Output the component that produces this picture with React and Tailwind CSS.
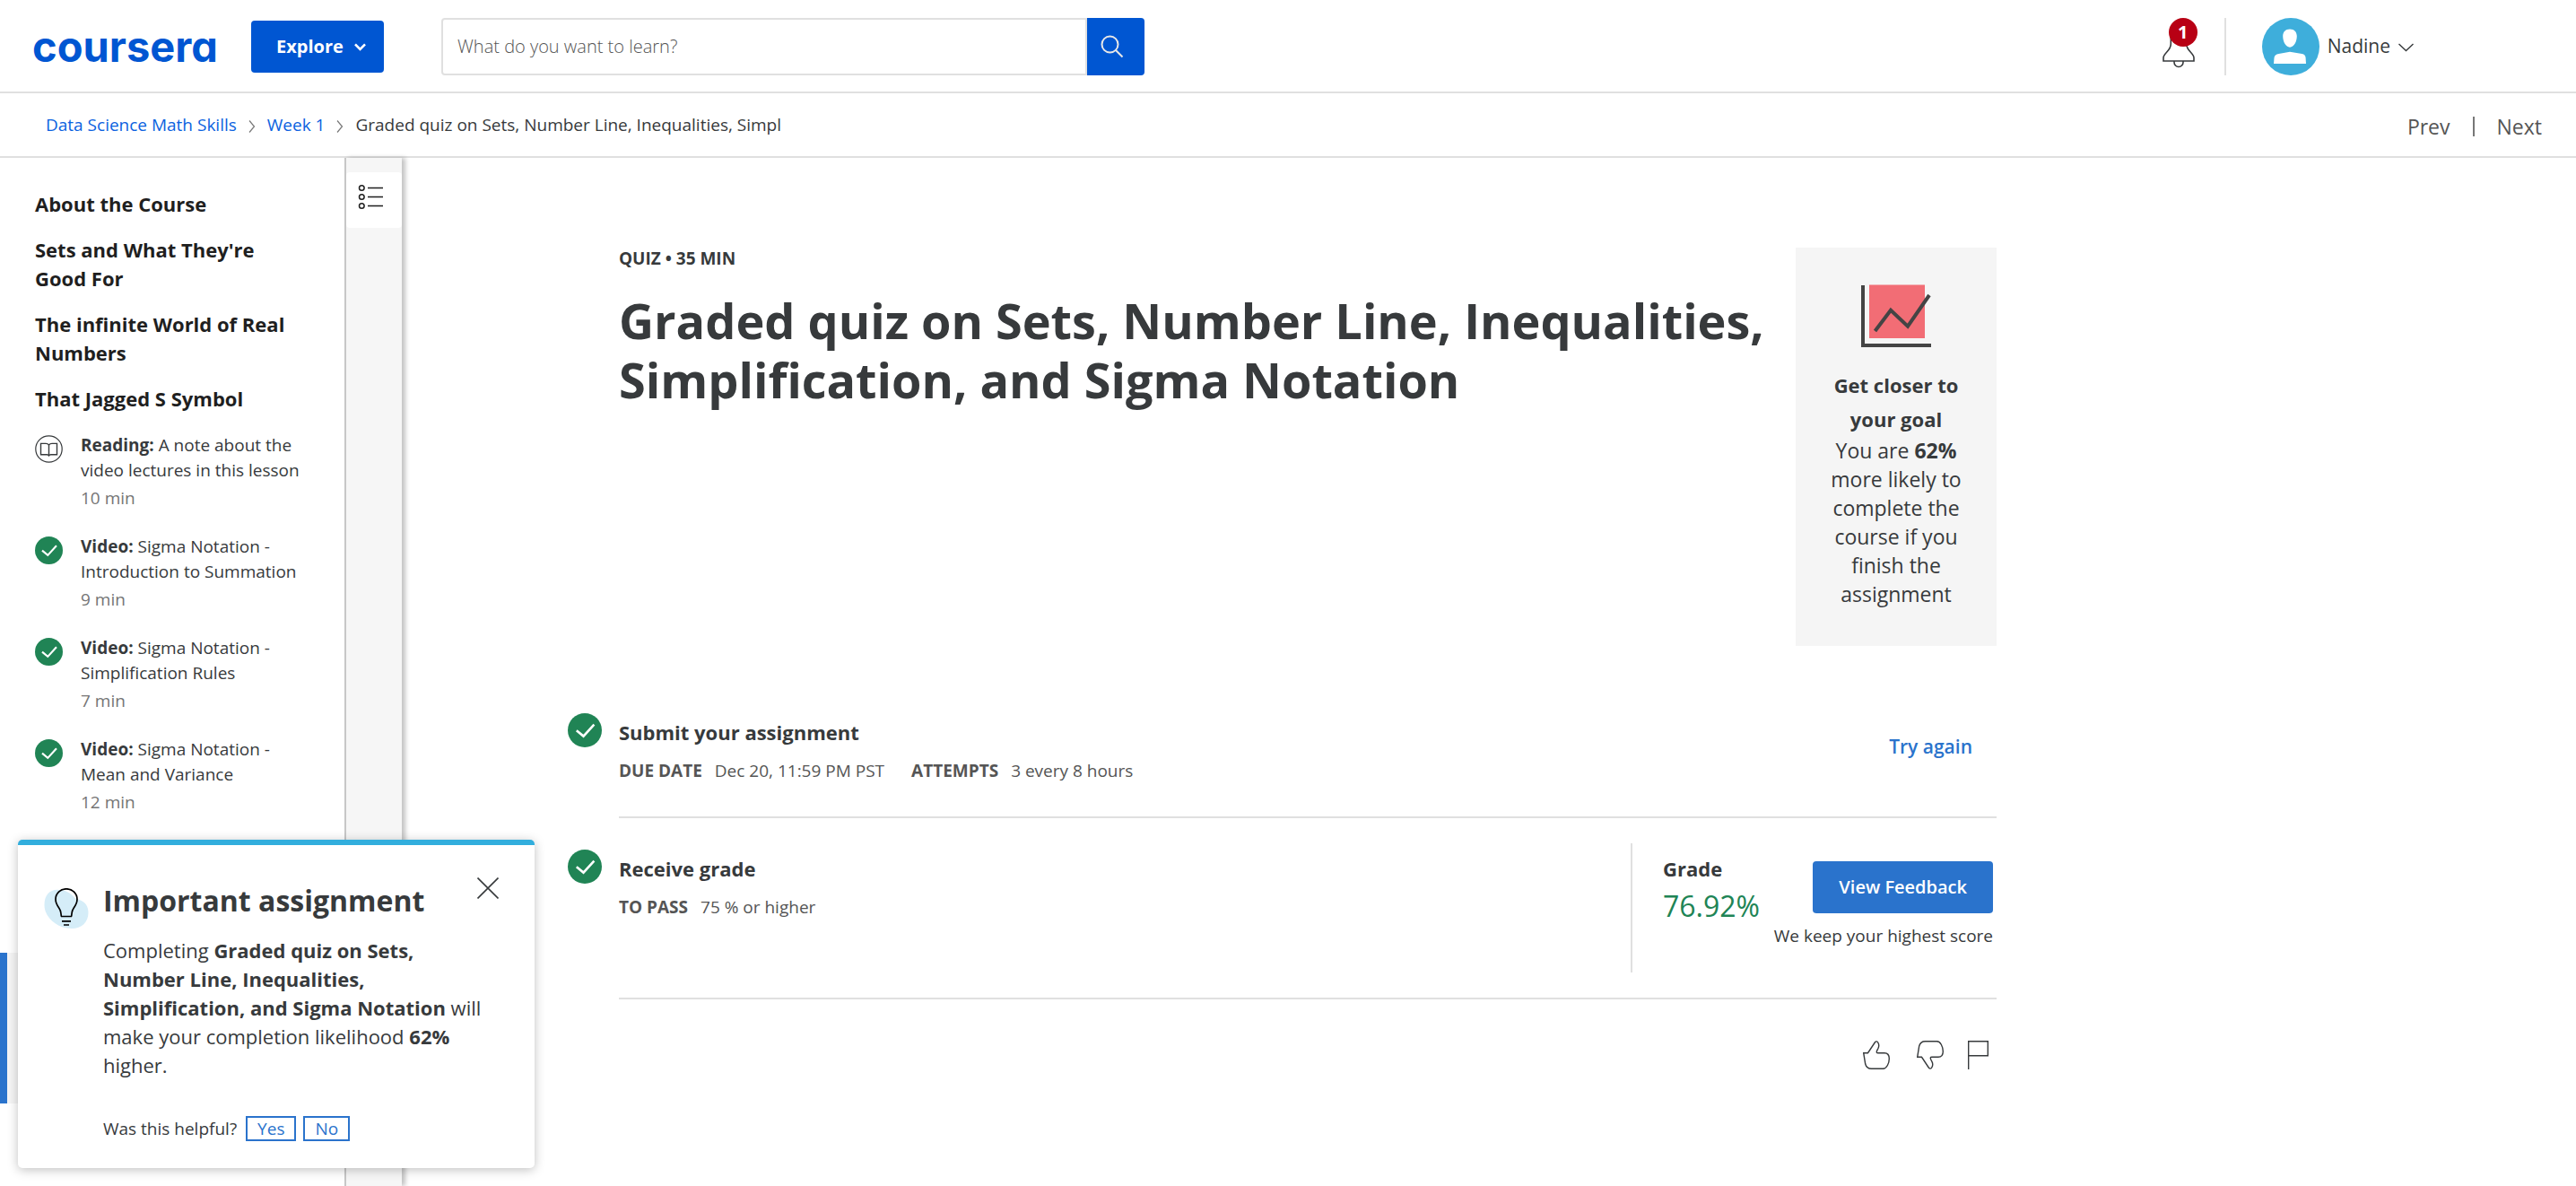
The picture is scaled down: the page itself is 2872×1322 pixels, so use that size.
import React from "react";

function CheckCircle({ className }) {
  return (
    <svg viewBox="0 0 38 38" className={className} role="img" aria-label="Completed">
      <circle cx="19" cy="19" r="19" fill="#208455" />
      <path d="M9.8 19.2 17.5 25.6 29.4 12.6" fill="none" stroke="#fff" strokeWidth="2.6" />
    </svg>
  );
}

function BookCircle({ className }) {
  return (
    <svg viewBox="0 0 31 31" className={className} fill="none" stroke="#373a3c" role="img" aria-label="Reading">
      <circle cx="15.5" cy="15.5" r="14.7" strokeWidth="1.2" />
      <path
        d="M15.5 11.2C14.6 9.7 13.5 9.4 12 9.4H6.5V21.8H13.4C14.6 21.8 15 22.2 15.5 23 16 22.2 16.4 21.8 17.6 21.8H24.5V9.4H19C17.5 9.4 16.4 9.7 15.5 11.2ZM15.5 11.2V22.6"
        strokeWidth="1.4"
      />
    </svg>
  );
}

function Header() {
  return (
    <header className="flex h-[104px] shrink-0 items-center border-b-2 border-[#e0e0e0] pt-[2px] pr-[181px] pl-[36px]">
      <a
        href="#home"
        className="w-[244px] shrink-0 font-['Inter',sans-serif] text-[47px] leading-[56px] font-bold text-[#0056d2] [font-feature-settings:'cv11']"
      >
        coursera
      </a>
      <button
        type="button"
        className="flex h-[58px] w-[148px] shrink-0 items-center gap-3 rounded-[4px] bg-[#0056d2] pl-7 text-[20px] leading-7 font-bold text-white"
      >
        Explore
        <svg viewBox="0 0 13 9" className="h-[9px] w-[13px]" fill="none" stroke="#fff" strokeWidth="2.6" aria-hidden="true">
          <path d="M1 1.4 6.5 7 12 1.4" />
        </svg>
      </button>
      <form role="search" className="ml-16 flex h-16 max-w-[784px] flex-1">
        <input
          type="text"
          aria-label="Search courses"
          placeholder="What do you want to learn?"
          className="min-w-0 flex-1 rounded-l-[4px] border-2 border-[#e0e0e0] px-4 text-[20px] font-light text-[#373a3c] placeholder:text-[#555]"
        />
        <button type="submit" aria-label="Search" className="flex w-16 items-center justify-center rounded-r-[4px] bg-[#0056d2]">
          <svg viewBox="0 0 26 26" className="mr-2 size-[26px]" fill="none" stroke="#e8e8e8" strokeWidth="2" aria-hidden="true">
            <circle cx="10.5" cy="10.5" r="9" />
            <path d="M17 17 24.5 24.5" />
          </svg>
        </button>
      </form>
      <div className="ml-auto flex items-center">
        <button type="button" aria-label="Notifications, 1 unread" className="relative">
          <svg viewBox="0 0 36 48" className="h-12 w-9" fill="none" stroke="#373a3c" strokeWidth="1.6" aria-hidden="true">
            <path d="M1 40V36.5C1 31 9.3 29 9.3 21V14C9.3 8 13 5 18 5S26.7 8 26.7 14V21C26.7 29 35 31 35 36.5V40Z" />
            <path d="M13 40V41.5A5 5 0 0 0 23 41.5V40" />
          </svg>
          <span className="absolute -top-2 left-[7px] flex size-8 items-center justify-center rounded-full bg-[#b80014] text-[20px] leading-none font-bold text-white">
            1
          </span>
        </button>
        <div className="ml-[33px] h-16 w-[2px] bg-[#e0e0e0]" />
        <button type="button" className="ml-10 flex items-center text-[21px] text-[#373a3c]">
          <svg viewBox="0 0 64 64" className="size-16" aria-hidden="true">
            <circle cx="32" cy="32" r="32" fill="#3eaedb" />
            <path
              d="M31 12.5C36 12.5 38.8 15.8 38.8 20.3 38.8 26.5 35.500 32.7 31 32.7S23.2 26.5 23.2 20.3C23.2 15.8 26 12.5 31 12.5ZM13 51 13.5 44.5C13.8 41.8 15.5 40.4 18.5 39.9L31 37.7 44.5 39.9C47.2 40.4 48.4 41.8 48.6 44.5L49 51Z"
              fill="#fff"
            />
          </svg>
          <span className="ml-[9px]">Nadine</span>
          <svg viewBox="0 0 17 10" className="mt-[2px] ml-[9px] h-[10px] w-[17px]" fill="none" stroke="#373a3c" strokeWidth="1.4" aria-hidden="true">
            <path d="M.5 1 8.5 8.5 16.5 1" />
          </svg>
        </button>
      </div>
    </header>
  );
}

function Separator() {
  return (
    <svg viewBox="0 0 8 14" className="mt-1 h-[14px] w-2" fill="none" stroke="#777" strokeWidth="1.2" aria-hidden="true">
      <path d="M1 .5 6.5 7 1 13.5" />
    </svg>
  );
}

function BreadcrumbBar() {
  return (
    <div className="flex h-[72px] shrink-0 items-center justify-between border-b-2 border-[#e0e0e0] pr-[38px] pl-[51px]">
      <nav aria-label="Breadcrumb" className="flex items-center gap-[13px] text-[19px] leading-7 text-[#0b62e0]">
        <a href="#course">Data Science Math Skills</a>
        <Separator />
        <a href="#week-1">Week 1</a>
        <Separator />
        <span className="text-[#373a3c]">Graded quiz on Sets, Number Line, Inequalities, Simpl</span>
      </nav>
      <nav aria-label="Items" className="flex items-center gap-[25px] pt-1 text-[23px] leading-8 text-[#555]">
        <a href="#prev">Prev</a>
        <span className="h-[22px] w-[2px] bg-[#777]" />
        <a href="#next">Next</a>
      </nav>
    </div>
  );
}

const headings = ["About the Course", "Sets and What They're Good For", "The infinite World of Real Numbers", "That Jagged S Symbol"];

const items = [
  { kind: "Reading:", title: "A note about the video lectures in this lesson", time: "10 min" },
  { kind: "Video:", title: "Sigma Notation - Introduction to Summation", time: "9 min", done: true },
  { kind: "Video:", title: "Sigma Notation - Simplification Rules", time: "7 min", done: true },
  { kind: "Video:", title: "Sigma Notation - Mean and Variance", time: "12 min", done: true },
];

function Sidebar() {
  return (
    <aside className="w-96 shrink-0 overflow-hidden pt-[35px]">
      <div className="flex flex-col gap-[19px] pr-12 pl-[39px] text-[22px] leading-8 font-bold text-[#1f1f1f]">
        {headings.map((h) => (
          <h2 key={h}>{h}</h2>
        ))}
      </div>
      <ul className="mt-[22px] flex flex-col gap-[26px] pr-10 pl-[39px] text-[19px] leading-7 text-[#373a3c]">
        {items.map((item) => (
          <li key={item.title}>
            <a href="#item" className="flex gap-5">
              {item.done ? <CheckCircle className="mt-[3px] size-[31px] shrink-0" /> : <BookCircle className="mt-[3px] size-[31px] shrink-0" />}
              <span className="flex flex-col gap-[3px]">
                <span>
                  <strong>{item.kind}</strong> {item.title}
                </span>
                <span className="text-[#757575]">{item.time}</span>
              </span>
            </a>
          </li>
        ))}
      </ul>
      <a href="#quiz" aria-label="Graded quiz" aria-current="page" className="mt-[154px] block h-[168px] border-l-8 border-[#2a73cc] bg-[#f5f5f5]" />
    </aside>
  );
}

function Rail() {
  return (
    <div className="w-16 shrink-0 border-l-2 border-[#c7c7c7] bg-[#f6f6f6] pt-4 shadow-[4px_0_5px_rgba(0,0,0,0.24)]">
      <button type="button" aria-label="Course outline" className="block w-full rounded-[4px] bg-white">
        <svg viewBox="0 0 62 62" className="size-[62px]" fill="none" stroke="#1f1f1f" aria-hidden="true">
          <g strokeWidth="1.5">
            <circle cx="17.3" cy="17.5" r="2.8" />
            <circle cx="17.3" cy="27.5" r="2.8" />
            <circle cx="17.3" cy="37.5" r="2.8" />
          </g>
          <path d="M24 17.5H41M24 27.5H41M24 37.5H41" strokeWidth="1.4" />
        </svg>
      </button>
    </div>
  );
}

function GoalCard() {
  return (
    <section className="w-56 shrink-0 bg-[#f5f5f5] px-8 pt-[41px] pb-[42px] text-center text-[23px] leading-8 text-[#373a3c]">
      <svg viewBox="0 0 78 70" className="mx-auto h-[70px] w-[78px]" fill="none" aria-hidden="true">
        <path d="M9 .5H71V60H9Z" fill="#f26d75" />
        <path d="M2 1V68H78M15.5 52 33 28.7 52 46.7 76 12" stroke="#444" strokeWidth="4" />
      </svg>
      <h2 className="mt-[23px] text-[22px] leading-[38px] font-bold">Get closer to your goal</h2>
      <p>
        You are <strong>62%</strong> more likely to complete the course if you finish the assignment
      </p>
    </section>
  );
}

const thumb =
  "M.7 13.7H5.5L13.3 2C14.5.3 16 .5 17 2.5 18.3 5 17.8 7 16.8 8.8 15.8 10.5 15 12 15.3 13 15.5 13.7 16 13.7 17 13.7H24C27.5 13.7 29.3 16.5 29.3 20 29.3 25 26.5 31.3 22.5 31.3H9.5C6 31.3 3.5 29 2.7 26Z";

function Main() {
  return (
    <main className="min-w-0 flex-1 overflow-hidden pt-[100px] pl-[185px] text-[#373a3c]">
      <div className="max-w-[1593px]">
        <div className="flex pl-[57px]">
          <div className="flex-1">
            <p className="text-[19px] leading-6 font-bold">QUIZ • 35 MIN</p>
            <h1 className="mt-6 text-[54px] leading-[66px] font-bold">
              Graded quiz on Sets, Number Line, Inequalities, Simplification, and Sigma Notation
            </h1>
          </div>
          <GoalCard />
        </div>

        <section className="mt-10 flex">
          <div className="w-[57px] shrink-0 pt-[35px]">
            <CheckCircle className="size-[38px]" />
          </div>
          <div className="flex flex-1 justify-between border-b-2 border-[#e0e0e0] pt-10 pb-[37px]">
            <div>
              <h2 className="text-[22px] leading-8 font-bold">Submit your assignment</h2>
              <dl className="mt-[13px] flex text-[19px] leading-7 text-[#555]">
                <dt className="font-bold">DUE DATE</dt>
                <dd className="ml-[14px]">Dec 20, 11:59 PM PST</dd>
                <dt className="ml-[30px] font-bold">ATTEMPTS</dt>
                <dd className="ml-[14px]">3 every 8 hours</dd>
              </dl>
            </div>
            <button type="button" className="mt-4 mr-[27px] h-8 text-[21px] leading-8 font-semibold text-[#2a73cc]">
              Try again
            </button>
          </div>
        </section>

        <section className="flex">
          <div className="w-[57px] shrink-0 pt-[35px]">
            <CheckCircle className="size-[38px]" />
          </div>
          <div className="flex flex-1 justify-between border-b-2 border-[#e0e0e0] py-7">
            <div className="pt-3">
              <h2 className="text-[22px] leading-8 font-bold">Receive grade</h2>
              <dl className="mt-[13px] flex text-[19px] leading-7 text-[#555]">
                <dt className="font-bold">TO PASS</dt>
                <dd className="ml-[14px]">75 % or higher</dd>
              </dl>
            </div>
            <div className="flex h-36 w-[408px] justify-between border-l-2 border-[#e0e0e0] pr-1 pl-[34px]">
              <div className="pt-3">
                <h3 className="text-[22px] leading-8 font-bold">Grade</h3>
                <p className="mt-1 text-[32px] leading-[44px] text-[#208455]">76.92%</p>
              </div>
              <div className="flex flex-col items-end pt-5">
                <button type="button" className="h-[58px] rounded-[4px] bg-[#2a73cc] px-[29px] text-[20px] leading-7 font-semibold text-white">
                  View Feedback
                </button>
                <p className="mt-[11px] text-[19px] leading-7">We keep your highest score</p>
              </div>
            </div>
          </div>
        </section>

        <div className="mt-[46px] flex justify-end pr-[9px]">
          <button type="button" aria-label="Like">
            <svg viewBox="0 0 30 32" className="h-8 w-[30px]" fill="none" stroke="#373a3c" strokeWidth="1.4" aria-hidden="true">
              <path d={thumb} />
            </svg>
          </button>
          <button type="button" aria-label="Dislike" className="ml-[30px]">
            <svg viewBox="0 0 30 32" className="h-8 w-[30px]" fill="none" stroke="#373a3c" strokeWidth="1.4" aria-hidden="true">
              <path d={thumb} transform="translate(0 32) scale(1 -1)" />
            </svg>
          </button>
          <button type="button" aria-label="Report an issue" className="ml-[27px]">
            <svg viewBox="0 0 23 32" className="h-8 w-[23px]" fill="none" stroke="#373a3c" strokeWidth="1.4" aria-hidden="true">
              <path d="M.7 32V.7H22.3V16.7H.7" />
            </svg>
          </button>
        </div>
      </div>
    </main>
  );
}

function AssignmentNotice() {
  return (
    <section
      aria-label="Important assignment"
      className="absolute bottom-5 left-5 flex w-[576px] rounded-[5px] border-t-[6px] border-[#32aedd] bg-white pt-10 pr-10 pb-[30px] pl-[29px] text-[#373a3c] shadow-[0_2px_12px_rgba(0,0,0,0.25)]"
    >
      <svg viewBox="0 0 50 46" className="mt-2 h-[46px] w-[50px] shrink-0" fill="none" aria-hidden="true">
        <path d="M.5 19C.5 8 6 1.8 15 1.8 23 1.8 30 5 35 11.5 42 13 49.5 17 49.5 27 49.5 38 42 45 31 45 14 45 .5 32 .5 19Z" fill="#d5edf8" />
        <path
          d="M19.5 31.5C18.8 30.8 19.6 26 17 22.5 14.5 19 13 16 13 12.5A12 11.7 0 0 1 37 12.5C37 16 35.5 19 33 22.5 30.4 26 31.2 30.8 30.5 31.5ZM20 36.8H30M22 41H28"
          stroke="#000"
          strokeWidth="1.7"
          strokeLinejoin="round"
        />
      </svg>
      <div className="ml-4 flex-1">
        <div className="flex items-start justify-between">
          <h2 className="text-[32px] leading-[44px] font-bold">Important assignment</h2>
          <button type="button" aria-label="Close" className="-mt-1">
            <svg viewBox="0 0 24 24" className="size-6" fill="none" stroke="#373a3c" strokeWidth="1.6" aria-hidden="true">
              <path d="M.5.5 23.5 23.5M23.5.5.5 23.5" />
            </svg>
          </button>
        </div>
        <p className="mt-[17px] text-[22px] leading-8">
          Completing <strong>Graded quiz on Sets, Number Line, Inequalities, Simplification, and Sigma Notation</strong> will make your completion likelihood{" "}
          <strong>62%</strong> higher.
        </p>
        <div className="mt-[41px] flex items-center gap-2 text-[19px] leading-6">
          <span className="pr-[2px]">Was this helpful?</span>
          <button type="button" className="border-2 border-[#2a73cc] px-[11px] text-[#2a73cc]">
            Yes
          </button>
          <button type="button" className="border-2 border-[#2a73cc] px-[11px] text-[#2a73cc]">
            No
          </button>
        </div>
      </div>
    </section>
  );
}

export default function App() {
  return (
    <div className="relative flex h-screen flex-col overflow-hidden bg-white font-['Open_Sans',sans-serif]">
      <Header />
      <BreadcrumbBar />
      <div className="flex min-h-0 flex-1">
        <Sidebar />
        <Rail />
        <Main />
      </div>
      <AssignmentNotice />
    </div>
  );
}
